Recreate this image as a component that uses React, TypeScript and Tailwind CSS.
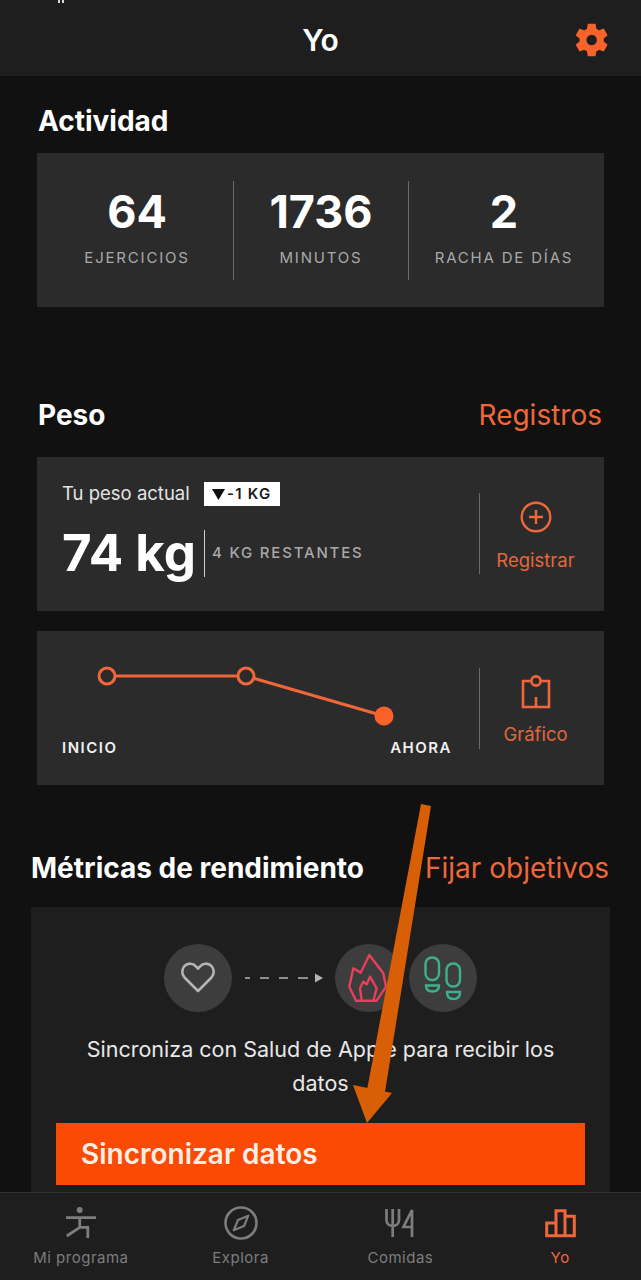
const font = { fontFamily: 'Inter, "Noto Sans", sans-serif' };

function GearIcon() {
  return (
    <svg viewBox="0 0 24 24" className="w-[38px] h-[38px]" fill="#f9622b">
      <path d="M19.4 13c.04-.32.06-.66.06-1s-.02-.68-.07-1l2.16-1.69a.52.52 0 0 0 .12-.66l-2.05-3.54a.51.51 0 0 0-.62-.23l-2.55 1.03a7.5 7.5 0 0 0-1.73-1l-.38-2.71A.5.5 0 0 0 13.83 1.8H9.73a.5.5 0 0 0-.5.42l-.39 2.71c-.62.26-1.2.6-1.73 1L4.56 4.9a.5.5 0 0 0-.62.22L1.89 8.66a.5.5 0 0 0 .12.65L4.18 11c-.05.32-.08.67-.08 1s.03.68.07 1l-2.16 1.69a.52.52 0 0 0-.12.66l2.05 3.54c.13.23.4.31.62.23l2.55-1.03c.53.4 1.11.74 1.73 1l.39 2.71c.04.24.25.42.5.42h4.1c.25 0 .46-.18.5-.42l.38-2.71a7.5 7.5 0 0 0 1.73-1l2.55 1.03c.23.08.49 0 .62-.23l2.05-3.54a.52.52 0 0 0-.12-.66L19.4 13zM11.78 15.3a3.3 3.3 0 1 1 0-6.6 3.3 3.3 0 0 1 0 6.6z" />
    </svg>
  );
}

function Stat({ value, label, width }: { value: string; label: string; width: string }) {
  return (
    <div className={`${width} flex flex-col items-center pt-[4px]`}>
      <div className="text-[45px] leading-[54px] font-bold text-white">{value}</div>
      <div className="mt-[10px] text-[15px] leading-[18px] tracking-[1.8px] text-[#a9a9a9]">{label}</div>
    </div>
  );
}

function SectionHead({ title, link, className }: { title: string; link?: string; className: string }) {
  return (
    <div className={`flex items-center justify-between ${className}`}>
      <h2 className="text-[28px] leading-[32px] font-bold text-white">{title}</h2>
      {link && <span className="text-[28px] leading-[32px] text-[#f0673a]">{link}</span>}
    </div>
  );
}

function NavItem({ label, active, children }: { label: string; active?: boolean; children: React.ReactNode }) {
  return (
    <div className="flex-1 flex flex-col items-center">
      <div className="h-[38px] flex items-center justify-center">{children}</div>
      <div className={`mt-[6px] text-[15px] leading-[20px] tracking-[0.5px] ${active ? 'text-[#f0673a]' : 'text-[#7d7d7d]'}`}>{label}</div>
    </div>
  );
}

export default function App() {
  return (
    <div style={font} className="relative w-[641px] h-[1280px] overflow-hidden bg-[#111112] flex flex-col">
      {/* Header */}
      <header className="relative h-[76px] shrink-0 bg-[#1e1e1f] flex items-center justify-center">
        <div className="absolute left-[58px] top-0 w-[2px] h-[3px] bg-[#d8d8d8]" />
        <div className="absolute left-[62px] top-0 w-[2px] h-[3px] bg-[#d8d8d8]" />
        <span className="text-[30px] leading-[34px] font-semibold text-white mt-[4px]">Yo</span>
        <div className="absolute right-[30px] top-[21px]">
          <GearIcon />
        </div>
      </header>

      <main className="flex-1 min-h-0 overflow-hidden">
        {/* Actividad */}
        <SectionHead title="Actividad" className="mx-[38px] mt-[29px]" />
        <section className="mx-[37px] mt-[16px] h-[154px] bg-[#2b2b2c] flex items-start pt-[28px]">
          <Stat value="64" label="EJERCICIOS" width="w-[196px] pl-[4px]" />
          <div className="w-px h-[99px] bg-[#6b6b6b]" />
          <Stat value="1736" label="MINUTOS" width="w-[174px]" />
          <div className="w-px h-[99px] bg-[#6b6b6b]" />
          <Stat value="2" label="RACHA DE DÍAS" width="w-[190px]" />
        </section>

        {/* Peso */}
        <SectionHead title="Peso" link="Registros" className="ml-[38px] mr-[39px] mt-[92px]" />
        <section className="mx-[37px] mt-[26px] h-[154px] bg-[#2b2b2c] flex pt-[24px]">
          <div className="w-[442px] pl-[25px] shrink-0">
            <div className="flex items-center h-[26px]">
              <span className="text-[18.500px] text-[#e4e4e4]">Tu peso actual</span>
              <span className="ml-[14px] h-[24px] w-[76px] bg-white flex items-center justify-center gap-[2px] text-[15px] font-semibold tracking-[1.2px] text-[#1a1a1a]">
                <svg viewBox="0 0 12 10" className="w-[13px] h-[11px]" fill="#111"><path d="M0 0h12L6 10z" /></svg>
                -1 KG
              </span>
            </div>
            <div className="flex items-center mt-[17px]">
              <span className="w-[142px] text-[51px] leading-[58px] font-bold text-white">74 kg</span>
              <div className="w-px h-[47px] bg-[#cfcfcf]" />
              <span className="ml-[7px] text-[15px] font-medium tracking-[1.8px] text-[#a9a9a9]">4 KG RESTANTES</span>
            </div>
          </div>
          <div className="w-px h-[81px] mt-[12px] bg-[#6b6b6b]" />
          <div className="flex-1 flex flex-col items-center pt-[20px] pr-[13px]">
            <svg viewBox="0 0 32 32" className="w-[32px] h-[32px]" fill="none" stroke="#f0673a" strokeWidth="2.4">
              <circle cx="16" cy="16" r="14.3" />
              <path d="M16 9v14M9 16h14" />
            </svg>
            <span className="mt-[15px] text-[18.500px] leading-[24px] text-[#e0683c]">Registrar</span>
          </div>
        </section>
        <section className="mx-[37px] mt-[20px] h-[154px] bg-[#2b2b2c] flex">
          <div className="relative w-[442px] shrink-0">
            <svg viewBox="0 0 442 154" className="absolute inset-0 w-[442px] h-[154px]" fill="none">
              <path d="M70 45H209L347 85" stroke="#f0673a" strokeWidth="3" />
              <circle cx="70" cy="45" r="8" fill="#2b2b2c" stroke="#f0673a" strokeWidth="3" />
              <circle cx="209" cy="45" r="8" fill="#2b2b2c" stroke="#f0673a" strokeWidth="3" />
              <circle cx="347" cy="85" r="9.5" fill="#f9622b" />
            </svg>
            <div className="absolute left-[25px] right-[27px] top-[108px] flex justify-between text-[15px] leading-[18px] font-semibold tracking-[1.500px] text-[#f0f0f0]">
              <span>INICIO</span>
              <span>AHORA</span>
            </div>
          </div>
          <div className="w-px h-[81px] mt-[37px] bg-[#6b6b6b]" />
          <div className="flex-1 flex flex-col items-center pt-[43px] pr-[13px]">
            <svg viewBox="0 0 30 36" className="w-[30px] h-[36px]" fill="none" stroke="#f0673a" strokeWidth="2.6">
              <path d="M10 7H2v26h26V7h-8" />
              <circle cx="15" cy="7" r="4.6" />
              <path d="M15 23v10" />
            </svg>
            <span className="mt-[12px] text-[18.500px] leading-[24px] text-[#e0683c]">Gráfico</span>
          </div>
        </section>

        {/* Métricas de rendimiento */}
        <SectionHead title="Métricas de rendimiento" link="Fijar objetivos" className="ml-[31px] mr-[32px] mt-[67px]" />
        <section className="mx-[31px] mt-[23px] h-[290px] bg-[#1e1e1f] px-[25px] pt-[37px]">
          <div className="h-[68px] flex items-center">
            <div className="ml-[108px] w-[68px] h-[68px] rounded-full bg-[#3d3d3e] flex items-center justify-center">
              <svg viewBox="0 0 36 32" className="w-[36px] h-[32px]" fill="none" stroke="#b5b5b5" strokeWidth="2.6" strokeLinejoin="round">
                <path d="M18 29 4.5 15.5a8.600 8.600 0 0 1 0-11.500c3.400-3.300 8.600-3 11.400.3L18 6.600l2.100-2.300c2.800-3.300 8-3.600 11.400-.3a8.600 8.600 0 0 1 0 11.500z" />
              </svg>
            </div>
            <svg viewBox="0 0 80 10" className="ml-[13px] w-[80px] h-[10px]" fill="none">
              <path d="M0 5h5M15 5h9M34 5h9M53 5h10" stroke="#b5b5b5" strokeWidth="1.5" />
              <path d="M70 0.500 78 5l-8 4.500z" fill="#b5b5b5" />
            </svg>
            <div className="ml-[10px] w-[68px] h-[68px] rounded-full bg-[#3d3d3e]">
              <svg viewBox="0 0 68 68" className="w-[68px] h-[68px]" fill="none" stroke="#e6405a" strokeWidth="2.4" strokeLinejoin="round">
                <path d="M21 56.700 14.300 42.700 18.300 24.300 25.700 28.700 34.300 11 48.300 29.300 51 42.700 41.700 56.700z" />
                <path d="M26.700 56.700 25 44.300 28.300 37.700 31.700 40.300 35 32.700 41.700 44.300 38.300 56.700" />
              </svg>
            </div>
            <div className="ml-[6px] w-[68px] h-[68px] rounded-full bg-[#3d3d3e]">
              <svg viewBox="0 0 68 68" className="w-[68px] h-[68px]" fill="none" stroke="#3fb08e" strokeWidth="2.4">
                <rect x="16.500" y="13.500" width="13.500" height="22.500" rx="6.500" />
                <path d="M17 41.500h13c0 4-2.500 6-6.500 6s-6.500-2-6.500-6z" />
                <rect x="37.500" y="19.500" width="13.500" height="23" rx="6.500" />
                <path d="M38 48h13c0 4.500-2.500 7-6.500 7s-6.500-2.500-6.500-7z" />
              </svg>
            </div>
          </div>
          <p className="mt-[20px] mx-[26px] text-center text-[21.500px] leading-[34px] text-[#e8e8e8]">Sincroniza con Salud de Apple para recibir los datos</p>
          <div className="mt-[23px] h-[62px] bg-[#fb4a03] flex items-center px-[25px] text-[28px] font-semibold text-[#fdeee6]">Sincronizar datos</div>
        </section>
      </main>

      {/* Bottom tabs */}
      <nav className="h-[88px] shrink-0 bg-[#1e1e1f] border-t border-[#333] flex pt-[11px] px-[1px]">
        <NavItem label="Mi programa">
          <svg viewBox="0 0 30 32" className="w-[30px] h-[32px]" fill="none" stroke="#7d7d7d" strokeWidth="2.800">
            <circle cx="13.700" cy="3" r="3" fill="#7d7d7d" stroke="none" />
            <path d="M0 10.700h30M13.700 10.700V20.500M0.800 29l13-8.700h8v10.700" />
          </svg>
        </NavItem>
        <NavItem label="Explora">
          <svg viewBox="0 0 34 34" className="w-[34px] h-[34px]" fill="none" stroke="#7d7d7d" strokeWidth="2.6">
            <circle cx="17" cy="17" r="15.500" />
            <path d="M24.300 9.700 20 20 9.700 24.300 14 14z" strokeWidth="2.200" strokeLinejoin="round" />
          </svg>
        </NavItem>
        <NavItem label="Comidas">
          <svg viewBox="0 0 30 30" className="w-[30px] h-[30px]" fill="none" stroke="#7d7d7d" strokeWidth="2.700">
            <path d="M1.500 1v11c0 4 3 6 6.200 6M14 1v11c0 4-3 6-6.300 6M7.700 1v28" />
            <path d="M27 29V2L18.500 19H27" />
          </svg>
        </NavItem>
        <NavItem label="Yo" active>
          <svg viewBox="0 0 31 29" className="w-[31px] h-[29px]" fill="none" stroke="#f0673a" strokeWidth="3">
            <path d="M1.700 26.700V14H11V1.700H20V7.300H29.300V26.700ZM11 14V26.700M20 7.300V26.700" />
          </svg>
        </NavItem>
      </nav>

      {/* Annotation arrow over the screenshot */}
      <svg viewBox="0 0 641 1280" className="absolute inset-0 w-[641px] h-[1280px] pointer-events-none">
        <path d="M421 804 431 806 385 1092 367 1090z" fill="#d95f06" />
        <path d="M353 1085 392 1093 367 1123z" fill="#d95f06" />
      </svg>
    </div>
  );
}
